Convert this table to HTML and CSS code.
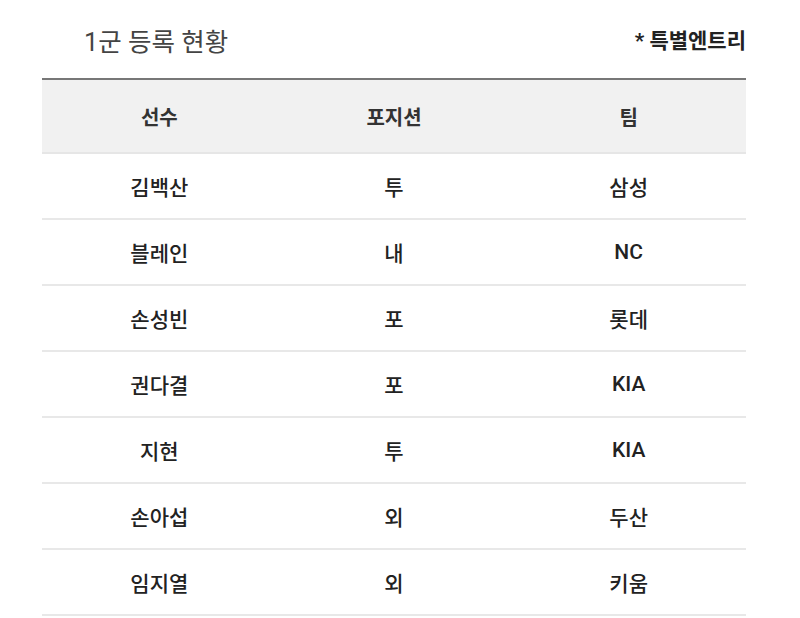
FILE: index.html
```html
<!DOCTYPE html>
<html lang="ko">
<head>
<meta charset="utf-8">
<link rel="stylesheet" href="styles.css">
</head>
<body>
<div class="wrap">
  <div class="top">
    <h2 class="title">1군 등록 현황</h2>
    <span class="note">* 특별엔트리</span>
  </div>
  <table class="roster">
    <thead>
      <tr><th>선수</th><th>포지션</th><th>팀</th></tr>
    </thead>
    <tbody>
      <tr><td>김백산</td><td>투</td><td>삼성</td></tr>
      <tr><td>블레인</td><td>내</td><td>NC</td></tr>
      <tr><td>손성빈</td><td>포</td><td>롯데</td></tr>
      <tr><td>권다결</td><td>포</td><td>KIA</td></tr>
      <tr><td>지현</td><td>투</td><td>KIA</td></tr>
      <tr><td>손아섭</td><td>외</td><td>두산</td></tr>
      <tr><td>임지열</td><td>외</td><td>키움</td></tr>
    </tbody>
  </table>
</div>
</body>
</html>
```
FILE: styles.css
```css
html, body {
  margin: 0;
  padding: 0;
  background: #ffffff;
}
body {
  font-family: Roboto, "Noto Sans CJK KR", "Noto Sans", sans-serif;
  color: #222;
}
.wrap {
  width: 704px;
  margin-left: 42px;
}
.top {
  display: flex;
  justify-content: space-between;
  align-items: center;
  height: 78px;
}
.title {
  margin: 0 0 0 42px;
  font-size: 25.5px;
  font-weight: 400;
  color: #444;
}
.note {
  font-size: 21px;
  font-weight: 700;
  color: #222;
}
.roster {
  width: 704px;
  border-collapse: collapse;
  table-layout: fixed;
  border-top: 2px solid #777;
}
.roster th {
  background: #f1f1f1;
  height: 72px;
  padding: 0;
  font-size: 20px;
  font-weight: 700;
  color: #333;
  border-bottom: 2px solid #e6e6e6;
}
.roster td {
  height: 64px;
  padding: 0;
  text-align: center;
  font-size: 21px;
  font-weight: 500;
  color: #222;
  border-bottom: 2px solid #e8e8e8;
}
```
